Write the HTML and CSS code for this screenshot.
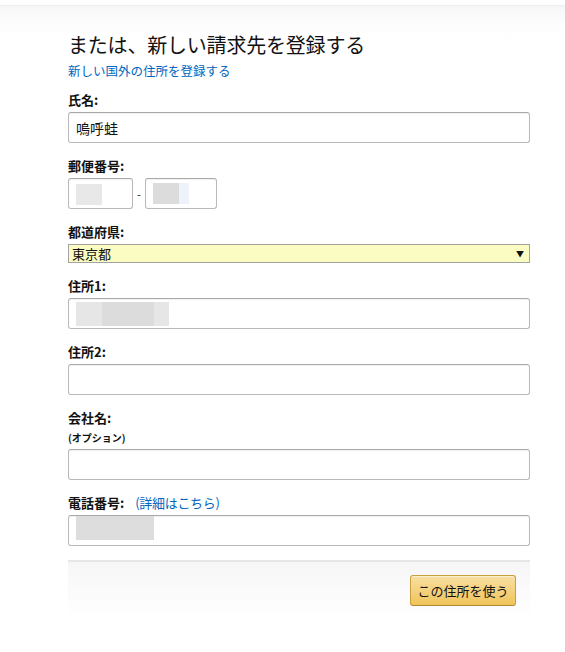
FILE: index.html
```html
<!DOCTYPE html>
<html lang="ja">
<head>
<meta charset="utf-8">
<title>請求先</title>
<link rel="stylesheet" href="styles.css">
</head>
<body>
<div class="topshade"></div>
<div class="page">
  <h1 class="title">または、新しい請求先を登録する</h1>
  <a class="link" href="#">新しい国外の住所を登録する</a>

  <div class="field first">
    <div class="label">氏名:</div>
    <div class="input"><span class="val">嗚呼蛙</span></div>
  </div>

  <div class="field">
    <div class="label">郵便番号:</div>
    <div class="zip">
      <div class="input zip1"><span class="blur b1"></span></div>
      <span class="dash">-</span>
      <div class="input zip2"><span class="blur b2a"></span><span class="blur b2b"></span></div>
    </div>
  </div>

  <div class="field">
    <div class="label">都道府県:</div>
    <div class="select"><span>東京都</span><span class="arrow">▼</span></div>
  </div>

  <div class="field">
    <div class="label">住所1:</div>
    <div class="input"><span class="blur a1"></span><span class="blur a2"></span><span class="blur a3"></span></div>
  </div>

  <div class="field">
    <div class="label">住所2:</div>
    <div class="input"></div>
  </div>

  <div class="field">
    <div class="label">会社名:</div>
    <div class="opt">(オプション)</div>
    <div class="input"></div>
  </div>

  <div class="field">
    <div class="label">電話番号: <a class="help" href="#">(詳細はこちら)</a></div>
    <div class="input"><span class="blur t1"></span></div>
  </div>

  <div class="footer">
    <button class="btn" type="button">この住所を使う</button>
  </div>
</div>
</body>
</html>
```

FILE: styles.css
```css
html, body {
  margin: 0;
  padding: 0;
  background: #fff;
}
body {
  font-family: "Noto Sans CJK JP", "Noto Sans", sans-serif;
  font-size: 13px;
  color: #111;
}
.topshade {
  height: 35px;
  border-top: 5px solid #fff;
  background: linear-gradient(to bottom, #ececec 0, #f7f7f7 2px, #fdfdfd 20px, #fff 35px);
}
.page {
  width: 462px;
  margin: -7px 0 0 68px;
}
.title {
  margin: 0;
  font-size: 20px;
  font-weight: normal;
  line-height: 24px;
  height: 24px;
  color: #111;
  letter-spacing: -0.2px;
}
.link {
  display: block;
  margin-top: 6px;
  color: #0066c0;
  text-decoration: none;
  line-height: 16px;
  font-size: 12.5px;
}
.field {
  margin-top: 15px;
}
.field.first {
  margin-top: 13px;
}
.label {
  font-weight: bold;
  line-height: 16px;
  height: 16px;
  margin-bottom: 4px;
}
.help {
  font-weight: normal;
  color: #0066c0;
  text-decoration: none;
  margin-left: 8px;
  letter-spacing: -0.3px;
}
.opt {
  font-size: 10px;
  font-weight: bold;
  line-height: 16px;
  margin-top: 0;
  margin-bottom: 3px;
}
.input {
  box-sizing: border-box;
  height: 31px;
  border: 1px solid #b9b9b9;
  border-top-color: #a9a9a9;
  border-radius: 3px;
  box-shadow: inset 0 1px 1px rgba(0,0,0,0.06);
  display: flex;
  align-items: center;
  padding: 0 7px;
  background: #fff;
}
.val {
  font-size: 14px;
}
.zip {
  display: flex;
  align-items: center;
}
.zip1 { width: 65px; }
.zip2 { width: 72px; }
.dash {
  width: 12px;
  text-align: center;
  font-size: 11px;
}
.blur {
  display: block;
  height: 24px;
}
.b1 { width: 26px; height: 21px; background: #e8e8e8; margin-top: 2px; }
.b2a { width: 26px; height: 21px; background: #dcdcdc; }
.b2b { width: 10px; height: 21px; background: #eef2fa; }
.a1 { width: 26px; background: #e6e6e6; }
.a2 { width: 52px; background: #dcdcdc; }
.a3 { width: 15px; background: #e6e6e6; }
.t1 { width: 78px; background: #dddddd; margin-top: -6px; }
.select {
  box-sizing: border-box;
  height: 19px;
  border: 1px solid #a3a3a3;
  background: #fbfcc2;
  display: flex;
  align-items: center;
  justify-content: space-between;
  padding: 0 5px 0 3px;
  line-height: 16px;
}
.arrow {
  font-size: 8px;
  color: #111;
}
.footer {
  margin-top: 14px;
  height: 58px;
  border-top: 2px solid #e6e6e6;
  background: linear-gradient(to bottom, #f6f6f6, #fff);
  display: flex;
  justify-content: flex-end;
  align-items: flex-start;
  padding: 13px 14px 0 0;
  box-sizing: border-box;
}
.btn {
  width: 106px;
  height: 31px;
  border: 1px solid #c9a03e;
  border-bottom-color: #b2892d;
  border-radius: 3px;
  background: linear-gradient(to bottom, #f8dfa2, #f0c45a);
  font-family: "Noto Sans CJK JP", sans-serif;
  font-size: 13px;
  color: #111;
  padding: 0;
  box-shadow: inset 0 1px 0 rgba(255,255,255,0.5);
}
```
